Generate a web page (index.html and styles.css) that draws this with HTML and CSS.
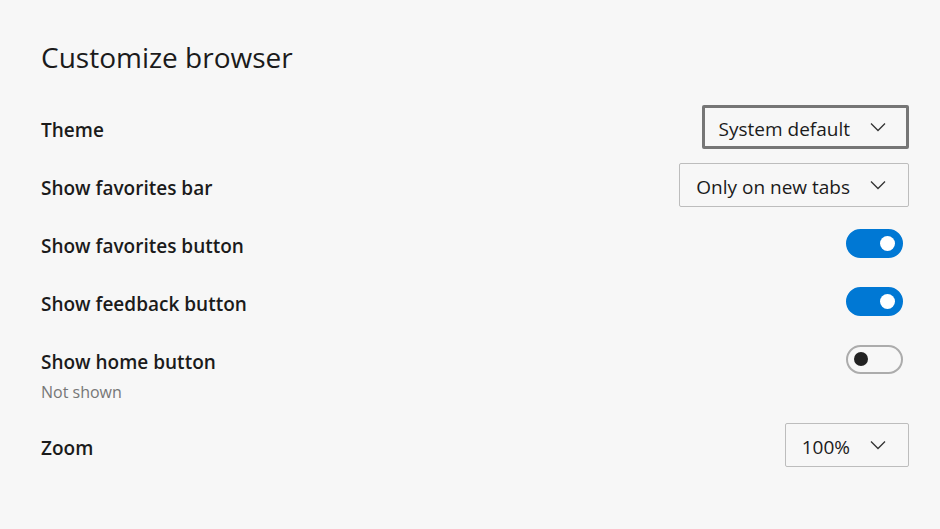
FILE: index.html
```html
<!DOCTYPE html>
<html lang="en">
<head>
  <meta charset="UTF-8">
  <title>Customize browser</title>
  <link rel="stylesheet" href="styles.css">
</head>
<body>
  <div class="settings">
    <h1>Customize browser</h1>

    <div class="row">
      <span class="label">Theme</span>
      <button class="dropdown focused">System default
        <svg class="chevron" viewBox="0 0 16 10"><path d="M1 1.5 L8 8.5 L15 1.5"/></svg>
      </button>
    </div>

    <div class="row">
      <span class="label">Show favorites bar</span>
      <button class="dropdown">Only on new tabs
        <svg class="chevron" viewBox="0 0 16 10"><path d="M1 1.5 L8 8.5 L15 1.5"/></svg>
      </button>
    </div>

    <div class="row">
      <span class="label">Show favorites button</span>
      <span class="toggle on"><span class="knob"></span></span>
    </div>

    <div class="row">
      <span class="label">Show feedback button</span>
      <span class="toggle on"><span class="knob"></span></span>
    </div>

    <div class="row with-note">
      <span class="label">Show home button</span>
      <span class="toggle"><span class="knob"></span></span>
    </div>
    <p class="note">Not shown</p>

    <div class="row">
      <span class="label">Zoom</span>
      <button class="dropdown">100%
        <svg class="chevron" viewBox="0 0 16 10"><path d="M1 1.5 L8 8.5 L15 1.5"/></svg>
      </button>
    </div>
  </div>
</body>
</html>
```

FILE: styles.css
```css
body {
  margin: 0;
  background-color: #f7f7f7;
  font-family: "Open Sans", "Noto Sans", sans-serif;
  color: #1b1b1b;
}
.settings {
  padding: 39px 31px 0 41px;
}
h1 {
  margin: 0 0 30px 0;
  font-size: 28px;
  line-height: 36px;
  font-weight: 400;
}
.row {
  display: flex;
  align-items: center;
  justify-content: space-between;
  height: 44px;
  margin-bottom: 14px;
}
.label {
  padding-top: 5px;
  font-size: 19px;
  font-weight: 600;
}
.row.with-note {
  margin-bottom: 0;
}
.note {
  margin: 1px 0 21px 0;
  font-size: 16px;
  line-height: 20px;
  color: #767676;
}
.dropdown {
  display: flex;
  align-items: center;
  height: 44px;
  box-sizing: border-box;
  padding: 3px 22px 0 16px;
  background: #f7f7f7;
  border: 1px solid #bdbdbd;
  border-radius: 2px;
  font-family: inherit;
  font-size: 19px;
  color: #1b1b1b;
}
.dropdown.focused {
  border: 3px solid #767676;
  padding: 3px 20px 0 14px;
}
.chevron {
  width: 16px;
  height: 10px;
  margin-left: 20px;
  margin-top: -3px;
  fill: none;
  stroke: #333;
  stroke-width: 1.3;
}
.toggle {
  display: flex;
  align-items: center;
  width: 57px;
  height: 29px;
  box-sizing: border-box;
  margin-right: 6px;
  padding: 0 6px;
  border: 2px solid #acacac;
  border-radius: 15px;
  background: #f7f7f7;
}
.toggle .knob {
  width: 14px;
  height: 14px;
  border-radius: 50%;
  background: #222;
}
.toggle.on {
  justify-content: flex-end;
  background: #0078d4;
  border-color: #0078d4;
  padding: 0 6px;
}
.toggle.on .knob {
  width: 15px;
  height: 15px;
  background: #fff;
}
```
